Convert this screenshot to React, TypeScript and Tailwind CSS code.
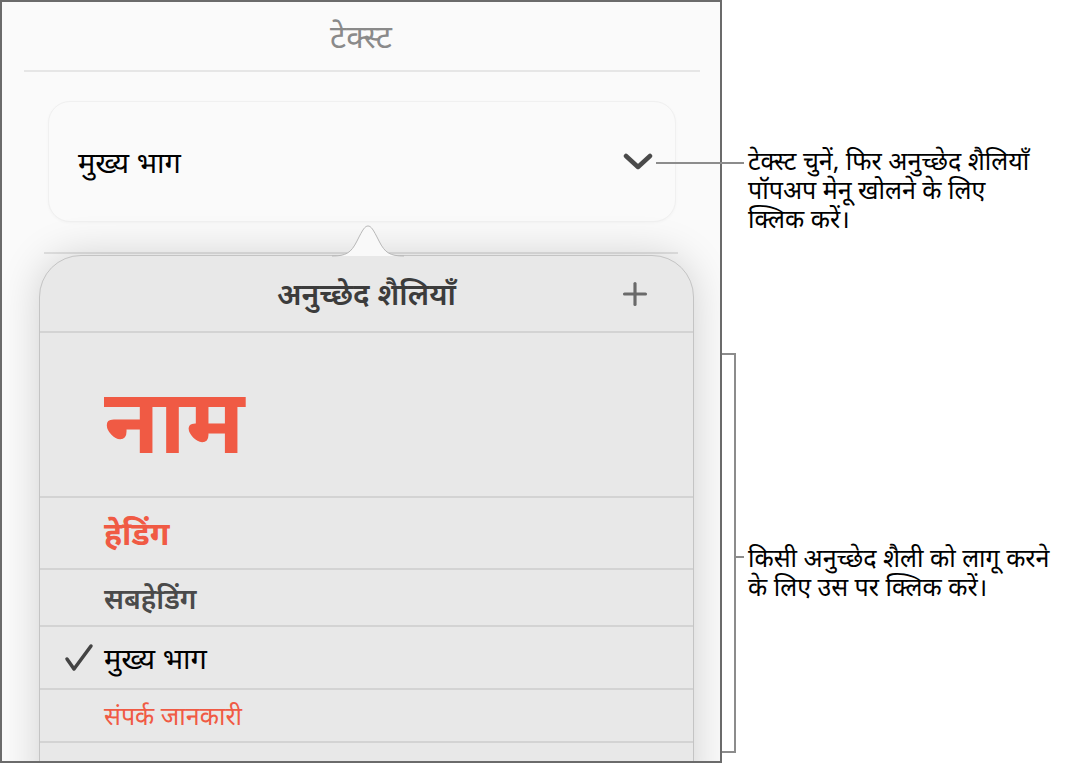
import { Plus } from "lucide-react";

const font = { fontFamily: '"Noto Sans", "Lato", sans-serif' };

type StyleRow = { label: string; className: string; rowClass: string; checked?: boolean };

const styles: StyleRow[] = [
  { label: "नाम", className: "text-[90px] font-bold text-[#f05a44]", rowClass: "h-[165px] pt-[8px]" },
  { label: "हेडिंग", className: "text-[32px] font-bold text-[#f05a44]", rowClass: "h-[72px]" },
  { label: "सबहेडिंग", className: "text-[28px] font-semibold text-[#4a4a4a]", rowClass: "h-[57px]" },
  { label: "मुख्य भाग", className: "text-[29px] text-black", rowClass: "h-[63px]", checked: true },
  { label: "संपर्क जानकारी", className: "text-[25px] text-[#f05a44]", rowClass: "h-[53px]" },
  { label: "", className: "", rowClass: "h-[60px]" },
];

function Chevron() {
  return (
    <svg width="30" height="18" viewBox="0 0 30 18" className="shrink-0">
      <polyline points="3,3 15,14 27,3" fill="none" stroke="#4a4a4a" strokeWidth="4.5" strokeLinecap="round" strokeLinejoin="round" />
    </svg>
  );
}

function Check() {
  return (
    <svg width="30" height="30" viewBox="0 0 30 30" className="absolute left-[24px] top-1/2 -translate-y-1/2">
      <path d="M3 16 L10 26 L27 3" fill="none" stroke="#444" strokeWidth="3.5" strokeLinecap="round" strokeLinejoin="round" />
    </svg>
  );
}

function StylesPopover() {
  return (
    <div className="relative ml-[37px] mr-[26px] mt-px shrink-0">
      {/* pointer nub above the header */}
      <svg width="72" height="33" viewBox="0 0 72 33" className="absolute left-[293px] -top-[31px] z-10">
        <path d="M0 32 C14 32 19 29 25 17 C31 5 33 2 36 2 C39 2 41 5 47 17 C53 29 58 32 72 32" fill="#f9f9f9" stroke="#b8b8b8" strokeWidth="1" />
      </svg>
      <div className="rounded-t-[42px] border border-[#c4c4c4] bg-[#e8e8e8] shadow-[0_0_40px_rgba(0,0,0,0.17)]">
        <div className="relative flex h-[75px] items-center justify-center">
          <span className="text-[30px] font-semibold text-[#3c3c3c]">अनुच्छेद शैलियाँ</span>
          <Plus className="absolute right-[40px] top-1/2 -translate-y-1/2 text-[#6a6a6a]" size={36} strokeWidth={2.1} />
        </div>
        {styles.map((s, i) => (
          <div key={i} className={`relative flex items-center border-t-2 border-[#d3d3d3] pl-[64px] ${s.rowClass}`}>
            {s.checked && <Check />}
            <span className={s.className}>{s.label}</span>
          </div>
        ))}
      </div>
    </div>
  );
}

export default function App() {
  return (
    <div className="relative flex h-[763px] w-[1083px] overflow-hidden bg-white" style={font}>
      <div className="flex h-[763px] w-[722px] shrink-0 flex-col overflow-hidden border-2 border-[#6b6b6b] bg-[#fafafa]">
        <div className="flex h-[68px] shrink-0 items-center justify-center">
          <span className="text-[32px] text-[#8a8a8a]">टेक्स्ट</span>
        </div>
        <div className="ml-[22px] mr-[20px] h-[2px] shrink-0 bg-[#e6e6e6]" />
        <div className="ml-[46px] mr-[44px] mt-[29px] flex h-[121px] shrink-0 items-center justify-between rounded-[22px] border border-[#f0f0f0] bg-[#fafafa] pl-[29px] pr-[22px] shadow-[0_1px_3px_rgba(0,0,0,0.03)]">
          <span className="text-[29px] text-black">मुख्य भाग</span>
          <Chevron />
        </div>
        <div className="ml-[42px] mr-[42px] mt-[30px] h-[2px] shrink-0 bg-[#e2e2e2]" />
        <StylesPopover />
      </div>

      {/* callout lines */}
      <div className="absolute left-[656px] top-[162px] h-[2px] w-[88px] bg-[#8c8c8c]" />
      <div className="absolute left-[722px] top-[353px] h-[400px] w-[14px] border-y-2 border-r-2 border-[#8c8c8c]" />
      <div className="absolute left-[736px] top-[556px] h-[2px] w-[8px] bg-[#8c8c8c]" />

      <div className="flex flex-1 flex-col pl-[26px] text-[25px] leading-[29px] text-black">
        <p className="mt-[146px]">
          टेक्स्ट चुनें, फिर अनुच्छेद शैलियाँ
          <br />
          पॉपअप मेनू खोलने के लिए
          <br />
          क्लिक करें।
        </p>
        <p className="mt-[310px]">
          किसी अनुच्छेद शैली को लागू करने
          <br />
          के लिए उस पर क्लिक करें।
        </p>
      </div>
    </div>
  );
}
